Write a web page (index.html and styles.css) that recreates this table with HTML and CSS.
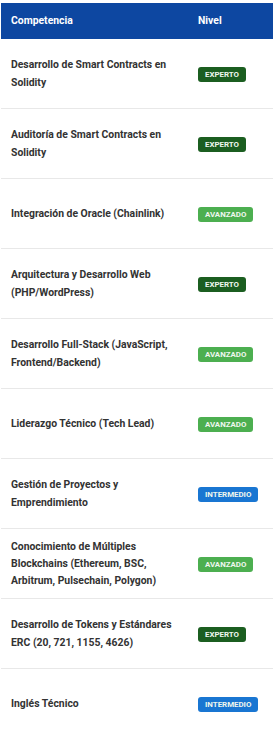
FILE: index.html
```html
<!DOCTYPE html>
<html lang="es">
<head>
    <meta charset="UTF-8">
    <meta name="viewport" content="width=device-width, initial-scale=1.0">
    <title>Competencias</title>
    <link rel="stylesheet" href="styles.css">
</head>
<body>
    <table class="skills">
        <thead>
            <tr>
                <th class="col-skill">Competencia</th>
                <th class="col-level">Nivel</th>
            </tr>
        </thead>
        <tbody>
            <tr>
                <td>Desarrollo de Smart Contracts en Solidity</td>
                <td><span class="badge expert">Experto</span></td>
            </tr>
            <tr>
                <td>Auditoría de Smart Contracts en Solidity</td>
                <td><span class="badge expert">Experto</span></td>
            </tr>
            <tr>
                <td>Integración de Oracle (Chainlink)</td>
                <td><span class="badge advanced">Avanzado</span></td>
            </tr>
            <tr>
                <td>Arquitectura y Desarrollo Web (PHP/WordPress)</td>
                <td><span class="badge expert">Experto</span></td>
            </tr>
            <tr>
                <td>Desarrollo Full-Stack (JavaScript, Frontend/Backend)</td>
                <td><span class="badge advanced">Avanzado</span></td>
            </tr>
            <tr>
                <td>Liderazgo Técnico (Tech Lead)</td>
                <td><span class="badge advanced">Avanzado</span></td>
            </tr>
            <tr>
                <td>Gestión de Proyectos y Emprendimiento</td>
                <td><span class="badge intermediate">Intermedio</span></td>
            </tr>
            <tr>
                <td>Conocimiento de Múltiples Blockchains (Ethereum, BSC, Arbitrum, Pulsechain, Polygon)</td>
                <td><span class="badge advanced">Avanzado</span></td>
            </tr>
            <tr>
                <td>Desarrollo de Tokens y Estándares ERC (20, 721, 1155, 4626)</td>
                <td><span class="badge expert">Experto</span></td>
            </tr>
            <tr>
                <td>Inglés Técnico</td>
                <td><span class="badge intermediate">Intermedio</span></td>
            </tr>
        </tbody>
    </table>
</body>
</html>
```

FILE: styles.css
```css
body {
    font-family: Roboto, "Liberation Sans", sans-serif;
    margin: 0;
    padding: 3px 0 0 1px;
    background-color: #ffffff;
    color: #333333;
    overflow: hidden;
}
.skills {
    border-collapse: collapse;
    width: 272px;
    table-layout: fixed;
    font-size: 10.4px;
    line-height: 17.3px;
}
.skills th {
    background-color: #0d47a1;
    color: #ffffff;
    font-weight: bold;
    text-align: left;
    height: 36px;
    padding: 0 10px;
}
.col-skill {
    width: 167px;
}
.skills td {
    height: 69px;
    padding: 0 10px;
    border-bottom: 1px solid #e8e8e8;
    font-weight: bold;
    vertical-align: middle;
}
.badge {
    display: inline-block;
    padding: 0 7px;
    height: 15px;
    line-height: 15px;
    border-radius: 3px;
    font-size: 7.9px;
    font-weight: bold;
    text-transform: uppercase;
    color: #eef6ee;
}
.expert {
    background-color: #1b5e20;
}
.advanced {
    background-color: #4caf50;
}
.intermediate {
    background-color: #1976d2;
}
```
